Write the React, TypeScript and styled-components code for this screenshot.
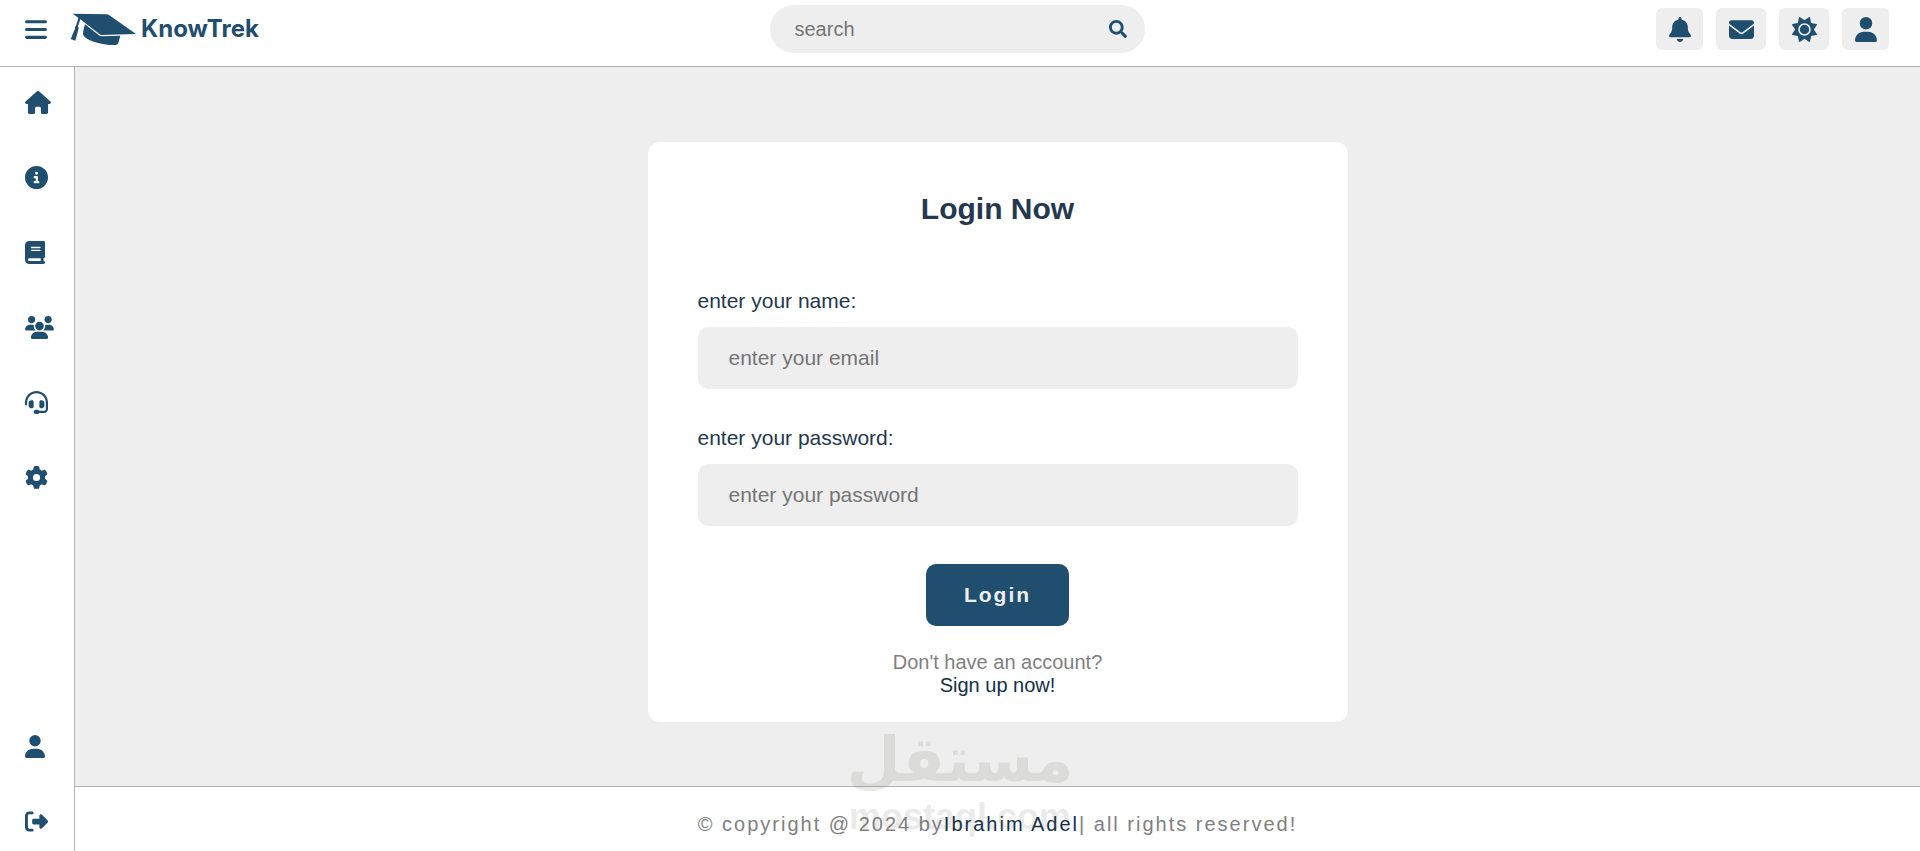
import React from "react";
import styled, { createGlobalStyle } from "styled-components";
import { FaSearch } from "react-icons/fa";
import {
  FaBars,
  FaBell,
  FaBook,
  FaCircleInfo,
  FaEnvelope,
  FaGear,
  FaHeadset,
  FaHouse,
  FaRightFromBracket,
  FaSun,
  FaUser,
  FaUsers,
} from "react-icons/fa6";

const colors = {
  primary: "#1f4e6e",
  heading: "#24384f",
  link: "#12304a",
  muted: "#808080",
  surface: "#eeeeee",
  line: "#b4b4b4",
};

const GlobalStyle = createGlobalStyle`
  *, *::before, *::after { box-sizing: border-box; }
  body {
    margin: 0;
    background: ${colors.surface};
    font-family: "Liberation Sans", Arial, sans-serif;
    font-size: 20px;
    line-height: 23px;
  }
  a { text-decoration: none; }
`;

const Page = styled.div`
  display: flex;
  flex-direction: column;
  min-height: 100vh;
`;

const Header = styled.header`
  display: grid;
  grid-template-columns: 1fr 375px 1fr;
  align-items: center;
  padding: 5px 31px 13px 25px;
  background: #fff;
  border-bottom: 1px solid ${colors.line};
`;

const Brand = styled.div`
  display: flex;
  align-items: center;
`;

const IconButton = styled.button<{ $iconWidth: number; $iconHeight?: number }>`
  display: flex;
  align-items: center;
  padding: 0;
  border: 0;
  background: none;
  color: ${colors.primary};
  cursor: pointer;
  svg {
    width: ${({ $iconWidth }) => $iconWidth}px;
    height: ${({ $iconHeight = 25 }) => $iconHeight}px;
  }
`;

const Logo = styled.a`
  display: flex;
  align-items: center;
  gap: 4px;
  margin-left: 23px;
  color: ${colors.primary};
  font: 700 24px/30px Inter, sans-serif;
  svg { width: 67px; height: 33px; }
`;

const Search = styled.form`
  display: flex;
  align-items: center;
  height: 48px;
  padding: 0 18px 0 25px;
  border-radius: 24px;
  background: ${colors.surface};
`;

const SearchInput = styled.input`
  flex: 1;
  min-width: 0;
  padding: 0;
  border: 0;
  outline: 0;
  background: none;
  font: inherit;
  &::placeholder { color: #757575; }
`;

const Actions = styled.nav`
  display: flex;
  justify-content: flex-end;
  gap: 13px;
`;

const ActionButton = styled(IconButton)`
  height: 42px;
  padding: 0 12px 0 13px;
  border-radius: 6px;
  background: ${colors.surface};
`;

const Body = styled.div`
  display: flex;
  flex: 1;
`;

const Sidebar = styled.nav`
  display: flex;
  flex-direction: column;
  justify-content: space-between;
  width: 75px;
  padding: 24px 0 18px 25px;
  background: #fff;
  border-right: 1px solid ${colors.line};
`;

const SideGroup = styled.div`
  display: flex;
  flex-direction: column;
  gap: 52px;
`;

const SideLink = styled.a<{ $iconWidth: number }>`
  display: flex;
  color: ${colors.primary};
  svg {
    width: ${({ $iconWidth }) => $iconWidth}px;
    height: 23px;
  }
`;

const Content = styled.div`
  display: flex;
  flex: 1;
  flex-direction: column;
`;

const Main = styled.main`
  display: flex;
  flex: 1;
  align-items: flex-start;
  justify-content: center;
  padding: 75px 20px 64px;
`;

const Card = styled.form`
  display: flex;
  flex-direction: column;
  align-items: center;
  width: 100%;
  max-width: 700px;
  padding: 50px 50px 25px;
  border-radius: 12px;
  background: #fff;
`;

const Title = styled.h1`
  margin: 0 0 64px;
  color: ${colors.heading};
  font-size: 30px;
  line-height: 34px;
`;

const Field = styled.div`
  display: flex;
  flex-direction: column;
  gap: 16px;
  width: 100%;
  margin-bottom: 38px;
`;

const Label = styled.label`
  color: ${colors.heading};
  font-size: 21px;
  line-height: 21px;
`;

const TextInput = styled.input`
  width: 100%;
  height: 62px;
  padding: 0 31px;
  border: 0;
  border-radius: 10px;
  background: ${colors.surface};
  font-family: inherit;
  font-size: 21px;
  &::placeholder { color: #757575; }
`;

const SubmitButton = styled.button`
  height: 62px;
  margin-bottom: 25px;
  padding: 0 38px;
  border: 0;
  border-radius: 10px;
  background: ${colors.primary};
  color: #eee;
  font-family: inherit;
  font-size: 21px;
  font-weight: 700;
  letter-spacing: 2px;
  cursor: pointer;
`;

const Hint = styled.p`
  margin: 0;
  color: ${colors.muted};
`;

const TextLink = styled.a`
  color: ${colors.link};
`;

const Footer = styled.footer`
  padding: 26px 20px 15px;
  border-top: 1px solid ${colors.line};
  background: #fff;
  color: ${colors.muted};
  text-align: center;
  letter-spacing: 2px;
`;

const Watermark = styled.div`
  position: fixed;
  bottom: 14px;
  left: 50%;
  display: flex;
  flex-direction: column;
  align-items: center;
  transform: translateX(-50%);
  color: #505046;
  opacity: 0.12;
  font-weight: 700;
  pointer-events: none;
`;

const WatermarkArabic = styled.span`
  font-family: "DejaVu Sans", sans-serif;
  font-size: 62px;
  line-height: 72px;
`;

const WatermarkLatin = styled.span`
  font-size: 36px;
  line-height: 41px;
`;

const GraduationCap = () => (
  <svg viewBox="13 13 201 99" fill="currentColor" aria-hidden="true">
    <path d="M21 15L124 17Q128 18 131 20L211 76L107 79Q104 79 101 76L46 33Z" />
    <path d="M58 47L98 78Q103 83 110 83L164 81L158 103Q156 109 149 109Q121 110 84 99Q59 91 53 80Q50 72 58 47Z" />
    <path d="M39 26L45 29L37 53Q41 57 38 63L29 96L15 91L28 60Q26 54 31 51Z" />
  </svg>
);

const actions = [
  { label: "Notifications", Icon: FaBell, width: 22 },
  { label: "Messages", Icon: FaEnvelope, width: 25 },
  { label: "Theme", Icon: FaSun, width: 25 },
  { label: "Profile", Icon: FaUser, width: 22 },
];

const mainLinks = [
  { label: "Home", Icon: FaHouse, width: 26 },
  { label: "About", Icon: FaCircleInfo, width: 23 },
  { label: "Courses", Icon: FaBook, width: 20 },
  { label: "Community", Icon: FaUsers, width: 29 },
  { label: "Support", Icon: FaHeadset, width: 23 },
  { label: "Settings", Icon: FaGear, width: 23 },
];

const accountLinks = [
  { label: "Account", Icon: FaUser, width: 20 },
  { label: "Log out", Icon: FaRightFromBracket, width: 23 },
];

export default function App() {
  return (
    <Page>
      <GlobalStyle />
      <Header>
        <Brand>
          <IconButton type="button" aria-label="Menu" $iconWidth={22}><FaBars /></IconButton>
          <Logo href="#"><GraduationCap />KnowTrek</Logo>
        </Brand>
        <Search role="search">
          <SearchInput type="text" placeholder="search" aria-label="Search" />
          <IconButton type="submit" aria-label="Submit search" $iconWidth={18} $iconHeight={18}>
            <FaSearch />
          </IconButton>
        </Search>
        <Actions aria-label="Quick actions">
          {actions.map(({ label, Icon, width }) => (
            <ActionButton key={label} type="button" aria-label={label} $iconWidth={width}>
              <Icon />
            </ActionButton>
          ))}
        </Actions>
      </Header>
      <Body>
        <Sidebar aria-label="Main">
          {[mainLinks, accountLinks].map((links, index) => (
            <SideGroup key={index}>
              {links.map(({ label, Icon, width }) => (
                <SideLink key={label} href="#" aria-label={label} $iconWidth={width}>
                  <Icon />
                </SideLink>
              ))}
            </SideGroup>
          ))}
        </Sidebar>
        <Content>
          <Main>
            <Card>
              <Title>Login Now</Title>
              <Field>
                <Label htmlFor="email">enter your name:</Label>
                <TextInput id="email" type="email" placeholder="enter your email" />
              </Field>
              <Field>
                <Label htmlFor="password">enter your password:</Label>
                <TextInput id="password" type="password" placeholder="enter your password" />
              </Field>
              <SubmitButton type="submit">Login</SubmitButton>
              <Hint>Don't have an account?</Hint>
              <TextLink href="#">Sign up now!</TextLink>
            </Card>
          </Main>
          <Footer>
            © copyright @ 2024 by<TextLink href="#">Ibrahim Adel</TextLink>| all rights reserved!
          </Footer>
        </Content>
      </Body>
      <Watermark>
        <WatermarkArabic lang="ar">مستقل</WatermarkArabic>
        <WatermarkLatin>mostaql.com</WatermarkLatin>
      </Watermark>
    </Page>
  );
}
